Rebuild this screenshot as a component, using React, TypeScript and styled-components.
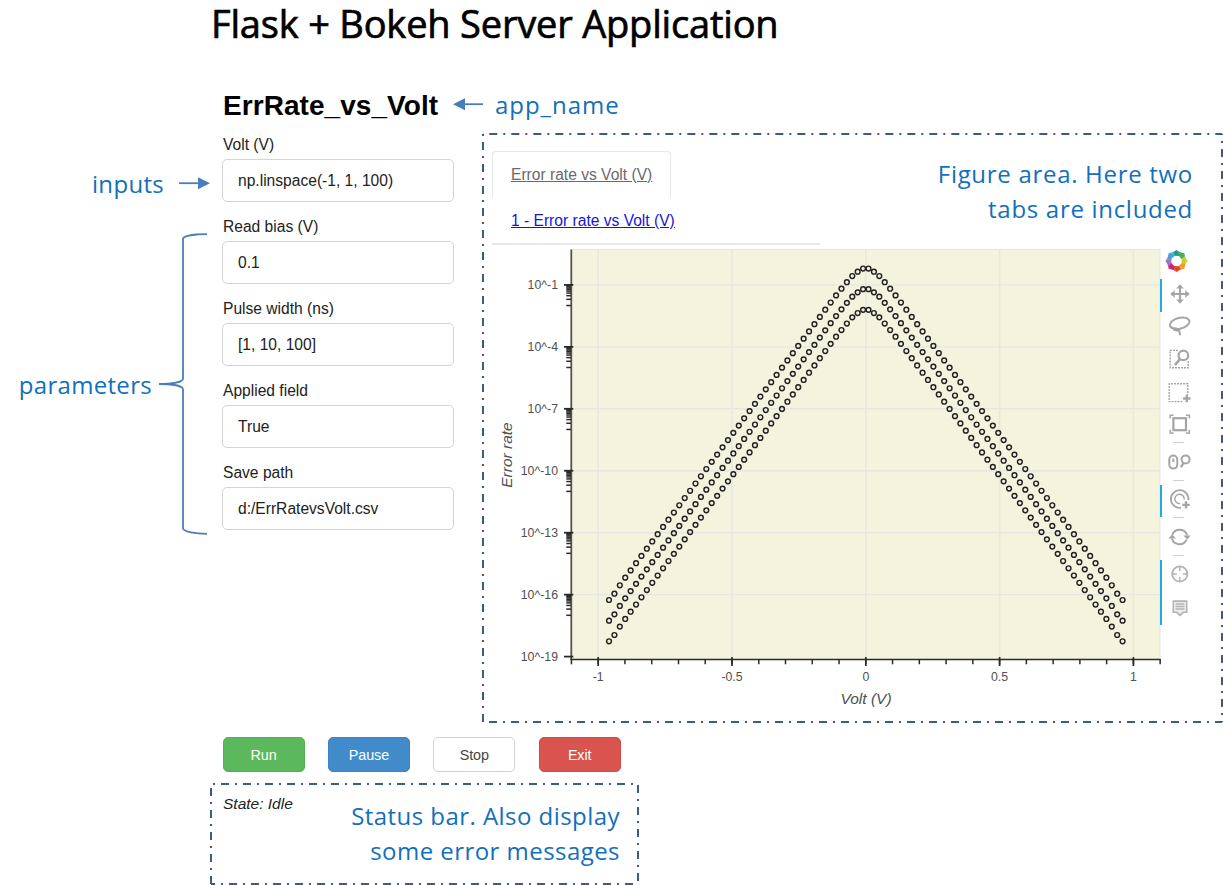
import React from 'react';
import styled, { createGlobalStyle, css } from 'styled-components';

const SANS = '"Liberation Sans", Arial, sans-serif';
const HUMANIST = '"Open Sans", "Noto Sans", sans-serif';
const NOTE_BLUE = '#1270ba';
const ARROW_BLUE = '#4a7ebb';

const GlobalStyle = createGlobalStyle`
  * { box-sizing: border-box; }
  body { margin: 0; background: #fff; font-family: ${SANS}; color: #222; }
`;

const Page = styled.div`
  width: 1223px;
  height: 885px;
  overflow: hidden;
  display: flex;
  flex-direction: column;
  background: #fff;
`;

const PageTitle = styled.h1`
  margin: 0;
  height: 76px;
  padding-left: 211px;
  font: 400 38px/46px ${HUMANIST};
  letter-spacing: -0.19px;
  color: #000;
  -webkit-text-stroke: 0.7px #000;
  white-space: nowrap;
`;

const AppNameRow = styled.div`
  display: flex;
  align-items: center;
  height: 57px;
  padding-left: 223px;
`;

const AppName = styled.h2`
  margin: 0 14px 0 0;
  padding-top: 2px;
  width: 216px;
  font: 700 28px/36px ${SANS};
  letter-spacing: 0.06px;
  color: #000;
  white-space: nowrap;
`;

const Note = styled.p<{ $spacing?: number }>`
  margin: 0;
  font: 400 24px/35px ${HUMANIST};
  letter-spacing: ${(p) => p.$spacing ?? 0.3}px;
  color: ${NOTE_BLUE};
  white-space: nowrap;
`;

const AppNameNote = styled(Note)`
  margin-left: 12px;
`;

const Workspace = styled.main`
  display: grid;
  grid-template-columns: 222px 260px 741px;
  height: 590px;
`;

const Gutter = styled.aside`
  display: flex;
  flex-direction: column;
`;

const InputsCallout = styled.div`
  display: flex;
  align-items: center;
  justify-content: flex-end;
  gap: 14px;
  height: 35px;
  margin-top: 33px;
  padding-right: 12px;
`;

const ParametersCallout = styled.div`
  display: flex;
  align-items: center;
  justify-content: flex-end;
  gap: 6px;
  height: 302px;
  margin-top: 32px;
  padding-right: 14px;
`;

const Form = styled.form`
  display: flex;
  flex-direction: column;
  width: 232px;
`;

const Field = styled.label`
  display: flex;
  flex-direction: column;
  height: 82px;
  padding-top: 2px;
  font: 400 15.6px/20px ${SANS};
  color: #222;
  white-space: nowrap;
`;

const FieldLabel = styled.span`
  padding-left: 1px;
  height: 24.4px;
`;

const TextInput = styled.input`
  width: 231.5px;
  height: 43px;
  padding: 1px 15px 0;
  border: 1.5px solid #d4d4d4;
  border-radius: 5px;
  outline: none;
  background: #fff;
  font: 400 15.6px ${SANS};
  color: #222;
`;

const Figure = styled.section`
  position: relative;
  display: flex;
  flex-direction: column;
`;

const Frame = styled.svg`
  position: absolute;
  inset: 0;
  width: 100%;
  height: 100%;
  pointer-events: none;
`;

const FigureHead = styled.div`
  display: flex;
  justify-content: space-between;
  height: 112px;
  padding: 18px 30px 0 10px;
`;

const Tabs = styled.nav`
  display: flex;
  flex-direction: column;
  align-items: flex-start;
  width: 328px;
  height: 94px;
  border-bottom: 2px solid #e8e8e8;
`;

const Tab = styled.a<{ $active?: boolean }>`
  display: block;
  padding: 0 18px;
  border: 1.5px solid transparent;
  border-bottom: 0;
  border-radius: 4px 4px 0 0;
  font: 400 15.6px/44px ${SANS};
  text-decoration: underline;
  white-space: nowrap;
  color: #1414e0;
  ${(p) =>
    p.$active &&
    css`
      height: 47px;
      width: 179px;
      border-color: #e6e6e6;
      color: #6a6a6a;
      line-height: 45px;
    `}
`;

const FigureNote = styled(Note)`
  padding-top: 5px;
  text-align: right;
`;

const PlotRow = styled.div`
  display: flex;
  align-items: flex-start;
`;

const Chart = styled.svg`
  display: block;
  flex: none;
  width: 678px;
  height: 475px;
  overflow: visible;
`;

const Toolbar = styled.div`
  display: flex;
  flex-direction: column;
  width: 40px;
`;

const LogoLink = styled.div`
  height: 34px;
  padding: 4px 0 0 5px;

  svg {
    display: block;
  }
`;

const ToolButton = styled.button<{ $active?: boolean }>`
  display: flex;
  align-items: flex-start;
  height: 32.7px;
  padding: 2.6px 0 0 6px;
  border: 0;
  border-left: 2px solid ${(p) => (p.$active ? '#26aae1' : 'transparent')};
  background: none;

  svg {
    display: block;
    flex: none;
  }
`;

const ToolDivider = styled.div`
  height: 4.8px;
  flex: none;

  &::before {
    content: '';
    display: block;
    width: 11px;
    height: 1px;
    margin-left: 13px;
    background: #cfcfcf;
  }
`;

const Actions = styled.div`
  display: flex;
  gap: 23.4px;
  height: 60px;
  padding: 14px 0 0 222.5px;
`;

const tones = {
  success: ['#5cb85c', '#55b055', '#fff'],
  primary: ['#428bca', '#3c84c4', '#fff'],
  plain: ['#fff', '#d2d2d2', '#444'],
  danger: ['#d9534f', '#d24b47', '#fff'],
};

const ActionButton = styled.button<{ $tone: keyof typeof tones }>`
  width: 82px;
  height: 35.4px;
  padding: 0;
  border: 1px solid ${(p) => tones[p.$tone][1]};
  border-radius: 5px;
  background: ${(p) => tones[p.$tone][0]};
  color: ${(p) => tones[p.$tone][2]};
  font: 400 14.4px ${SANS};
  letter-spacing: -0.1px;
`;

const StatusBar = styled.footer`
  position: relative;
  display: flex;
  justify-content: space-between;
  width: 429px;
  height: 102px;
  margin-left: 210px;
  padding: 11px 19px 0 13px;
`;

const StatusText = styled.em`
  font: italic 400 15.5px/20px ${SANS};
  white-space: nowrap;
`;

const StatusNote = styled(Note)`
  padding-top: 4px;
  text-align: right;
`;

type FrameOffsets = { top: number; right: number; bottom: number; left: number };

function DashDotFrame({ w, h, start }: { w: number; h: number; start: FrameOffsets }) {
  const l = 1;
  const r = w - 1;
  const b = h - 1;
  return (
    <Frame viewBox={`0 0 ${w} ${h}`} stroke="#3b5a86" strokeWidth="2" strokeDasharray="8 6 2 6" fill="none">
      <line x1={l} y1={l} x2={r} y2={l} strokeDashoffset={-start.top} />
      <line x1={r} y1={l} x2={r} y2={b} strokeDashoffset={-start.right} />
      <line x1={l} y1={b} x2={r} y2={b} strokeDashoffset={-start.bottom} />
      <line x1={l} y1={l} x2={l} y2={b} strokeDashoffset={-start.left} />
    </Frame>
  );
}

const FIELDS = [
  ['Volt (V)', 'np.linspace(-1, 1, 100)'],
  ['Read bias (V)', '0.1'],
  ['Pulse width (ns)', '[1, 10, 100]'],
  ['Applied field', 'True'],
  ['Save path', 'd:/ErrRatevsVolt.csv'],
];

const PLOT = { left: 571, right: 1160, top: 249.5, bottom: 659.3 };
const DECADE = 20.65;
const xOf = (v: number) => 865.8 + v * 267.6;
const yOf = (exp: number) => 284.9 + (-1 - exp) * DECADE;

const HEAD = [268.5, 271.7, 276, 282.2, 288.7, 295.4, 302.5];
const TAIL = [585.3, 593.7, 600];
const profile = Array.from({ length: 48 }, (_, k) =>
  k < 7 ? HEAD[k] : k > 44 ? TAIL[k - 45] : 309.7 + (k - 7) * 7.243,
);

const Y_TICKS = [-1, -4, -7, -10, -13, -16, -19];
const X_TICKS = [-1, -0.5, 0, 0.5, 1];
const X_MINOR = Array.from({ length: 23 }, (_, i) => (i - 11) / 10);

function ErrorRateChart() {
  return (
    <Chart viewBox="482 245 678 475" fontFamily={SANS}>
      <rect x={PLOT.left} y={PLOT.top} width={PLOT.right - PLOT.left} height={PLOT.bottom - PLOT.top} fill="#f4f3dd" stroke="#e5e5e0" />
      <g stroke="#e6e7e1" strokeWidth="1.4">
        {Y_TICKS.slice(0, 6).map((t) => (
          <line key={t} x1={PLOT.left} x2={PLOT.right} y1={yOf(t)} y2={yOf(t)} />
        ))}
        {X_TICKS.map((t) => (
          <line key={t} x1={xOf(t)} x2={xOf(t)} y1={PLOT.top} y2={PLOT.bottom} />
        ))}
      </g>
      <g stroke="#222" strokeWidth="1.45" fill="none">
        {[0, 1, 2].map((s) =>
          profile.map((y, k) =>
            [-1, 1].map((side) => (
              <circle key={`${s}-${k}-${side}`} cx={xOf((side * (2 * k + 1)) / 99)} cy={y + s * DECADE} r="2.4" />
            )),
          ),
        )}
      </g>
      <g stroke="#2a2a2a" strokeWidth="1.5">
        <line x1="571.3" x2="571.3" y1={PLOT.top} y2="660" stroke="#555" strokeWidth="1.8" />
        <line x1="570.5" x2="1160.5" y1="659.4" y2="659.4" />
        {Y_TICKS.map((t) => (
          <line key={t} x1="564" x2="573.3" y1={yOf(t)} y2={yOf(t)} strokeWidth="1.8" />
        ))}
        {Y_TICKS.slice(0, 6).flatMap((t) =>
          [9, 8, 7, 6, 5, 4, 3, 2, 1].map((m) => {
            const y = yOf(t + Math.log10(m / 10));
            return <line key={`${t}-${m}`} x1="566.3" x2="571" y1={y} y2={y} />;
          }),
        )}
        {X_TICKS.map((t) => (
          <line key={t} x1={xOf(t)} x2={xOf(t)} y1="657" y2="666" strokeWidth="1.7" />
        ))}
        {X_MINOR.map((t) => (
          <line key={t} x1={xOf(t)} x2={xOf(t)} y1="659" y2="664.3" />
        ))}
      </g>
      <g fill="#505050" fontSize="12.3">
        {Y_TICKS.map((t) => (
          <text key={t} x="558" y={yOf(t) + 4.2} textAnchor="end">
            {`10^${t}`}
          </text>
        ))}
        {X_TICKS.map((t) => (
          <text key={t} x={xOf(t)} y="681.4" textAnchor="middle">
            {t}
          </text>
        ))}
      </g>
      <g fill="#505050" fontSize="15.5" fontStyle="italic" textAnchor="middle">
        <text x="866" y="704.3">Volt (V)</text>
        <text transform="translate(512 455) rotate(-90)">Error rate</text>
      </g>
    </Chart>
  );
}

const LOGO_COLORS = ['#1a9c80', '#3fb24c', '#c9cf35', '#f59a23', '#e5402f', '#c9257c', '#a672c4', '#35a9dc'];

function BokehLogo() {
  return (
    <svg width="23" height="24" viewBox="-12 -12 24 24">
      {LOGO_COLORS.map((c, i) => (
        <g key={c} transform={`rotate(${i * 45})`}>
          <path d="M-4.6 -8.6 L0 -11.6 L4.6 -8.6 L2.8 -5.2 L-2.2 -5.4 Z" fill={c} />
          <path d="M0 -11.6 L4.6 -8.6 L2.8 -5.2 Z" fill="#fff" opacity="0.14" />
        </g>
      ))}
    </svg>
  );
}

function ToolIcon({ children }: { children: React.ReactNode }) {
  return (
    <svg width="24" height="24" viewBox="0 0 24 24" fill="none" stroke="#a3a5a8" strokeWidth="2">
      {children}
    </svg>
  );
}

const PanIcon = () => (
  <ToolIcon>
    <path d="M12 5v14M5 12h14" />
    <path d="M12 2.2l3.8 4.3H8.2zM12 21.8l3.8-4.3H8.2zM2.2 12l4.5-3.8v7.6zM21.8 12l-4.5-3.8v7.6z" fill="#a3a5a8" stroke="none" />
  </ToolIcon>
);

const LassoIcon = () => (
  <ToolIcon>
    <ellipse cx="11.7" cy="9.3" rx="10" ry="5.4" transform="rotate(-14 11.7 9.3)" />
    <path d="M3 12.6c.8 3 3.3 1.4 5.2 1.8 2.4.5 3.8 2.7 3.8 6.8M5.6 15.8c2 .6 4 .2 5.6 1.2" />
  </ToolIcon>
);

const BoxZoomIcon = () => (
  <ToolIcon>
    <path d="M10 3.4H2.2v17.4h18V13" strokeWidth="1.4" strokeDasharray="2 1" />
    <circle cx="15.4" cy="8.4" r="4.8" fill="#fff" strokeWidth="2.2" />
    <path d="M12 12.2l-5 5.6" strokeWidth="2.7" />
  </ToolIcon>
);

const BoxSelectIcon = () => (
  <ToolIcon>
    <path d="M14.5 21.6H1.2V3.8h18.6v11" strokeWidth="1.4" strokeDasharray="2 1" />
    <path d="M18.8 14.8v7.4M15.1 18.5h7.4" strokeWidth="2.4" />
  </ToolIcon>
);

const ResizeIcon = () => (
  <ToolIcon>
    <rect x="5.4" y="6.2" width="12.6" height="12" strokeWidth="2.2" />
    <path d="M2.2 6.4V3.2h3.4M17.8 3.2h3.6v3.2M21.4 17.8V21h-3.6M5.6 21H2.2v-3.2" strokeWidth="1.5" />
  </ToolIcon>
);

const WheelZoomIcon = () => (
  <ToolIcon>
    <rect x="1.3" y="5.6" width="8" height="13" rx="4" />
    <path d="M5.3 8.6v3.4" />
    <circle cx="17.6" cy="9.4" r="4" />
    <path d="M15.4 12.8l-2.4 4.4" strokeWidth="2.4" />
  </ToolIcon>
);

const TapIcon = () => (
  <ToolIcon>
    <path d="M20.4 13.2A8.8 8.8 0 1 0 13 20.7" strokeWidth="1.8" />
    <path d="M16.2 12.6a4.7 4.7 0 1 0-4 4" strokeWidth="1.4" />
    <path d="M18 14.2v7.4M14.3 17.9h7.4" strokeWidth="2.4" />
  </ToolIcon>
);

const ResetIcon = () => (
  <ToolIcon>
    <path d="M4.4 9.6A7.9 7.9 0 0 1 19.2 10.4M18.6 14.6A7.9 7.9 0 0 1 3.9 13.8" />
    <path d="M15.3 10.4h7.4l-3.4 4.2zM.4 13.4h7.4L4.2 9.2z" fill="#a3a5a8" stroke="none" />
  </ToolIcon>
);

const CrosshairIcon = () => (
  <ToolIcon>
    <g stroke="#b4b4b4">
      <circle cx="11.8" cy="12" r="7.6" strokeWidth="1.8" />
      <path d="M11.8 4.6v4.4M11.8 15v4.4M4.4 12h4.4M14.8 12h4.4" strokeWidth="1.5" />
    </g>
  </ToolIcon>
);

const HoverIcon = () => (
  <ToolIcon>
    <g stroke="#b4b4b4">
      <path d="M5.3 6.1h13.4v11.2h-3.4L12 20.4l-3.3-3.1H5.3z" strokeWidth="1.6" fill="#ececec" />
      <path d="M7.6 9h8.8M7.6 11.5h8.8M7.6 14h8.8" strokeWidth="1.3" />
    </g>
  </ToolIcon>
);

export default function App() {
  return (
    <Page>
      <GlobalStyle />
      <PageTitle>Flask + Bokeh Server Application</PageTitle>
      <AppNameRow>
        <AppName>ErrRate_vs_Volt</AppName>
        <svg width="30" height="14" viewBox="0 0 30 14">
          <path d="M10 6.2h20" stroke={ARROW_BLUE} strokeWidth="1.8" />
          <path d="M0 6.2l12-6v12z" fill={ARROW_BLUE} />
        </svg>
        <AppNameNote $spacing={0.95}>app_name</AppNameNote>
      </AppNameRow>

      <Workspace>
        <Gutter>
          <InputsCallout>
            <Note>inputs</Note>
            <svg width="32" height="14" viewBox="0 0 32 14">
              <path d="M1 6.2h20" stroke={ARROW_BLUE} strokeWidth="1.8" />
              <path d="M32 6.2l-12-6v12z" fill={ARROW_BLUE} />
            </svg>
          </InputsCallout>
          <ParametersCallout>
            <Note>parameters</Note>
            <svg width="50" height="302" viewBox="0 0 50 302" fill="none" stroke={ARROW_BLUE} strokeWidth="1.8">
              <path d="M49 1.2C38 1.2 25 2.5 25 6V145.5C25 149 14 151 1 151C14 151 25 153 25 156.5V295C25 299 38 300.8 49 300.8" />
            </svg>
          </ParametersCallout>
        </Gutter>

        <Form>
          {FIELDS.map(([label, value]) => (
            <Field key={label}>
              <FieldLabel>{label}</FieldLabel>
              <TextInput defaultValue={value} />
            </Field>
          ))}
        </Form>

        <Figure>
          <DashDotFrame w={741} h={590} start={{ top: 6.3, right: 15, bottom: 6, left: 8 }} />
          <FigureHead>
            <Tabs>
              <Tab $active>Error rate vs Volt (V)</Tab>
              <Tab>1 - Error rate vs Volt (V)</Tab>
            </Tabs>
            <FigureNote $spacing={0.7}>
              Figure area. Here two
              <br />
              tabs are included
            </FigureNote>
          </FigureHead>
          <PlotRow>
            <ErrorRateChart />
            <Toolbar>
              <LogoLink>
                <BokehLogo />
              </LogoLink>
              <ToolButton $active><PanIcon /></ToolButton>
              <ToolButton><LassoIcon /></ToolButton>
              <ToolButton><BoxZoomIcon /></ToolButton>
              <ToolButton><BoxSelectIcon /></ToolButton>
              <ToolButton><ResizeIcon /></ToolButton>
              <ToolDivider />
              <ToolButton><WheelZoomIcon /></ToolButton>
              <ToolDivider />
              <ToolButton $active><TapIcon /></ToolButton>
              <ToolDivider />
              <ToolButton><ResetIcon /></ToolButton>
              <ToolDivider />
              <ToolButton $active><CrosshairIcon /></ToolButton>
              <ToolButton $active><HoverIcon /></ToolButton>
            </Toolbar>
          </PlotRow>
        </Figure>
      </Workspace>

      <Actions>
        <ActionButton $tone="success">Run</ActionButton>
        <ActionButton $tone="primary">Pause</ActionButton>
        <ActionButton $tone="plain">Stop</ActionButton>
        <ActionButton $tone="danger">Exit</ActionButton>
      </Actions>

      <StatusBar>
        <DashDotFrame w={429} h={102} start={{ top: 10, right: 1, bottom: 18, left: 4 }} />
        <StatusText>State: Idle</StatusText>
        <StatusNote $spacing={0.45}>
          Status bar. Also display
          <br />
          some error messages
        </StatusNote>
      </StatusBar>
    </Page>
  );
}
